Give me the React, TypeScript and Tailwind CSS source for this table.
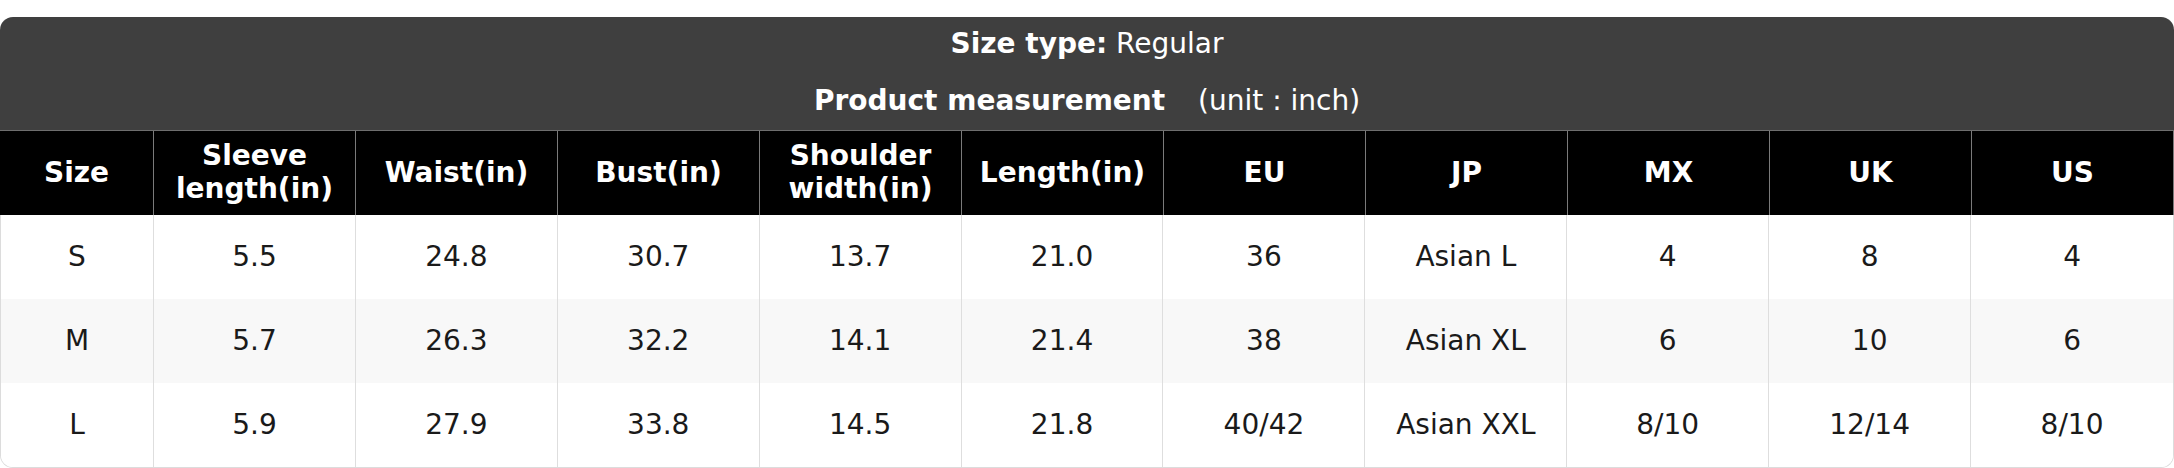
import React from "react";

const headers = [
  "Size",
  "Sleeve length(in)",
  "Waist(in)",
  "Bust(in)",
  "Shoulder width(in)",
  "Length(in)",
  "EU",
  "JP",
  "MX",
  "UK",
  "US",
];

const rows = [
  ["S", "5.5", "24.8", "30.7", "13.7", "21.0", "36", "Asian L", "4", "8", "4"],
  ["M", "5.7", "26.3", "32.2", "14.1", "21.4", "38", "Asian XL", "6", "10", "6"],
  ["L", "5.9", "27.9", "33.8", "14.5", "21.8", "40/42", "Asian XXL", "8/10", "12/14", "8/10"],
];

export default function App() {
  return (
    <div className="w-[2174px] h-[468px] bg-white pt-[17px] font-['DejaVu_Sans',sans-serif] text-[28px]">
      <div className="w-full">
        <div className="bg-[#3f3f3f] rounded-t-[13px] h-[113px] pt-[11px] text-white text-center leading-[32.6px]">
          <div>
            <span className="font-bold">Size type:</span> Regular
          </div>
          <div className="mt-[24px]">
            <span className="font-bold">Product measurement</span>
            <span className="ml-[24px]"> (unit : inch)</span>
          </div>
        </div>
        <div className="grid grid-cols-[154px_repeat(10,minmax(0,1fr))] bg-black h-[85px] border-t border-[#6e6e6e]">
          {headers.map((h, i) => (
            <div
              key={i}
              className="flex items-center justify-center text-center font-bold text-white leading-[32.6px] px-[10px] border-r border-[#7a7a7a]"
            >
              {h}
            </div>
          ))}
        </div>
        <div className="border-x border-b border-[#dcdcdc] rounded-b-[13px] overflow-hidden">
          {rows.map((r, ri) => (
            <div
              key={ri}
              className={
                "grid grid-cols-[153px_repeat(10,minmax(0,1fr))] h-[84px] " +
                (ri === 1 ? "bg-[#f8f8f8]" : "bg-white")
              }
            >
              {r.map((c, ci) => (
                <div
                  key={ci}
                  className={
                    "flex items-center justify-center text-[#1a1a1a] leading-[32.6px] " +
                    (ci < r.length - 1 ? "border-r border-[#dedede]" : "")
                  }
                >
                  {c}
                </div>
              ))}
            </div>
          ))}
        </div>
      </div>
    </div>
  );
}
